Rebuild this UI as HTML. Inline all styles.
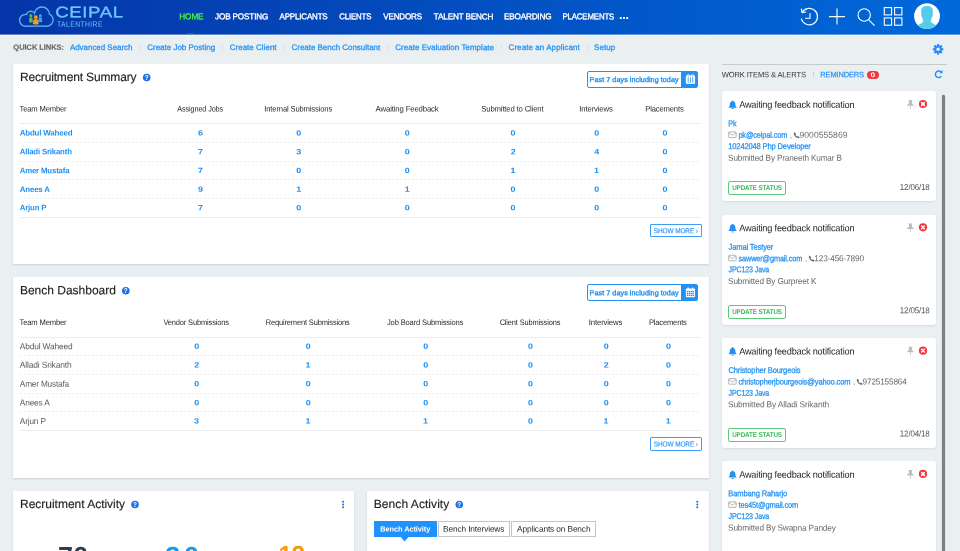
<!DOCTYPE html>
<html lang="en">
<head>
<meta charset="utf-8">
<title>CEIPAL TalentHire - Home</title>
<style>
html,body{margin:0;padding:0}
body{width:960px;height:551px;overflow:hidden;position:relative;background:#eaeff2;font-family:"Liberation Sans",sans-serif;color:#2a2a2a}
.t{position:absolute;white-space:pre;line-height:1;transform-origin:0 50%}
.abs{position:absolute}
#app{position:absolute;left:0;top:0;width:960px;height:551px;overflow:hidden;will-change:transform}
#top{position:absolute;left:0;top:0;width:960px;height:34px;background:linear-gradient(90deg,#0535a8,#0069da)}
.card{position:absolute;background:#fff;box-shadow:0 1px 2px rgba(60,80,100,.18)}
.hl{position:absolute;height:1px;background:#e9ebec;left:20px;width:681px}
.dl{position:absolute;height:1px;left:20px;width:681px;background:repeating-linear-gradient(90deg,#eeeef0 0 2.4px,transparent 2.4px 4px)}
.qsep{position:absolute;top:44.5px;width:1px;height:5.5px;background:#dbe0e4}
.datebtn{position:absolute;left:587px;width:111px;height:17px;box-sizing:border-box;border:1px solid #2490f4;border-radius:2px;background:#fff}
.datebtn i{position:absolute;right:0;top:0;bottom:0;width:16px;background:#2490f4}
.more{position:absolute;left:650px;width:52px;height:13.3px;box-sizing:border-box;border:1px solid #3f9df5;border-radius:1px;background:#fff}
.tab{position:absolute;top:521px;height:15.5px;box-sizing:border-box;border:1px solid #c4c4c4;background:#fff}
.wcard{position:absolute;left:722px;width:214.3px;height:110px;background:#fff;border-radius:3px;box-shadow:0 1px 2px rgba(60,80,100,.12)}
.upd{position:absolute;left:728.4px;width:57.6px;height:13.5px;box-sizing:border-box;border:1px solid #5cc87b;border-radius:2px}
svg{position:absolute;overflow:visible}
</style>
</head>
<body>
<div id="app">

<!-- ===== top bar ===== -->
<div id="top">
  <div class="abs" style="left:187px;top:33px;width:7px;height:1px;background:#3fd86a;opacity:.25"></div>
  <!-- logo -->
  <svg style="left:18px;top:6px" width="37" height="22"><g transform="translate(0.90 0.25)">
    <defs><mask id="cl" maskUnits="userSpaceOnUse" x="-1" y="-1" width="37" height="23">
      <g fill="#fff" stroke="#fff" stroke-width="2.7"><circle cx="6.6" cy="14" r="5.2"/><circle cx="11.9" cy="9.5" r="3.8"/><circle cx="23" cy="8.4" r="7"/><circle cx="28" cy="13.6" r="5.6"/><rect x="6.6" y="11" width="21.4" height="8.2"/></g>
      <g fill="#000"><circle cx="6.6" cy="14" r="5.2"/><circle cx="11.9" cy="9.5" r="3.8"/><circle cx="23" cy="8.4" r="7"/><circle cx="28" cy="13.6" r="5.6"/><rect x="6.6" y="11" width="21.4" height="8.2"/></g>
    </mask></defs>
    <rect x="-1" y="-1" width="37" height="23" fill="#5cb2ef" mask="url(#cl)"/>
    <g transform="translate(0.2,0.7)">
      <circle cx="11.8" cy="8.7" r="1.55" fill="#5cb848"/><path d="M9.9 15.2 L10.1 11.6 Q10.3 10.2 11.8 10.2 Q13.3 10.2 13.5 11.6 L13.7 15.2 Q11.8 16 9.9 15.2 Z" fill="#5cb848"/>
      <circle cx="21.2" cy="8.7" r="1.55" fill="#3aa2e4"/><path d="M19.3 15 L19.5 11.6 Q19.7 10.2 21.2 10.2 Q22.7 10.2 22.9 11.6 L23.1 15 Q21.2 15.8 19.3 15 Z" fill="#3aa2e4"/>
      <circle cx="16.7" cy="10.2" r="1.9" fill="#f7991c"/><path d="M13.8 17 L14.2 13.6 Q14.5 12 16.7 12 Q18.9 12 19.2 13.6 L19.6 17 Q16.7 18.2 13.8 17 Z" fill="#f7991c"/>
    </g>
  </g></svg>
  <span class="t" style="left:55px;top:4px;font-size:15.3px;letter-spacing:0.500px;color:#6cc6fa;transform:translate(0.14px,0.26px) scaleX(1.2169) rotate(0.03deg);-webkit-text-stroke:0.3px #6cc6fa;">CEIPAL</span><span class="t" style="left:57px;top:20px;font-size:7.8px;letter-spacing:0.500px;color:#6cc6fa;transform:translate(0.03px,0.70px) scaleX(0.8657) rotate(0.03deg);">TALENTHIRE</span>
  <nav><span class="t" style="left:179px;top:12px;font-size:8.5px;letter-spacing:-0.170px;color:#46ee4a;transform:translate(0.33px,0.35px) scaleX(0.9709) rotate(0.03deg);-webkit-text-stroke:0.35px #46ee4a;">HOME</span><span class="t" style="left:215px;top:12px;font-size:8.5px;letter-spacing:-0.170px;color:#fff;transform:translate(0.06px,0.35px) scaleX(0.9614) rotate(0.03deg);-webkit-text-stroke:0.35px #fff;">JOB POSTING</span><span class="t" style="left:279px;top:12px;font-size:8.5px;letter-spacing:-0.170px;color:#fff;transform:translate(0.58px,0.35px) scaleX(0.9359) rotate(0.03deg);-webkit-text-stroke:0.35px #fff;">APPLICANTS</span><span class="t" style="left:339px;top:12px;font-size:8.5px;letter-spacing:-0.170px;color:#fff;transform:translate(0.28px,0.35px) scaleX(0.9226) rotate(0.03deg);-webkit-text-stroke:0.35px #fff;">CLIENTS</span><span class="t" style="left:383px;top:12px;font-size:8.5px;letter-spacing:-0.170px;color:#fff;transform:translate(0.23px,0.35px) scaleX(0.9473) rotate(0.03deg);-webkit-text-stroke:0.35px #fff;">VENDORS</span><span class="t" style="left:433px;top:12px;font-size:8.5px;letter-spacing:-0.170px;color:#fff;transform:translate(0.78px,0.35px) scaleX(0.9604) rotate(0.03deg);-webkit-text-stroke:0.35px #fff;">TALENT BENCH</span><span class="t" style="left:503px;top:12px;font-size:8.5px;letter-spacing:-0.170px;color:#fff;transform:translate(0.93px,0.35px) scaleX(0.9587) rotate(0.03deg);-webkit-text-stroke:0.35px #fff;">EBOARDING</span><span class="t" style="left:562px;top:12px;font-size:8.5px;letter-spacing:-0.170px;color:#fff;transform:translate(0.45px,0.35px) scaleX(0.9255) rotate(0.03deg);-webkit-text-stroke:0.35px #fff;">PLACEMENTS</span><span class="t" style="left:619px;top:8px;font-size:13px;font-weight:700;letter-spacing:-0.260px;color:#fff;transform:translate(0.03px,0.00px) scaleX(0.9670) rotate(0.03deg);">...</span></nav>
  <!-- history -->
  <svg style="left:799px;top:7px" width="22" height="22" fill="none" stroke="#fff" stroke-width="1.1" stroke-linecap="round" stroke-linejoin="round"><g transform="translate(0.00 0.00) scale(1.0300 1.0300)">
    <path d="M3.1 5.2 A8 8 0 1 1 2.3 11.6"/>
    <path d="M2.3 1.9 L3 5.6 L6.6 4.9"/>
    <path d="M10.7 6.3 V10.9 H6.4"/>
  </g></svg>
  <!-- plus -->
  <svg style="left:829px;top:8px" width="17" height="18" stroke="#fff" stroke-width="1.1" fill="none"><g transform="translate(0.00 0.60)"><path d="M8 0 V16 M0 8 H16"/></g></svg>
  <!-- search -->
  <svg style="left:857px;top:8px" width="19" height="19" stroke="#fff" stroke-width="1.1" fill="none" stroke-linecap="round"><g transform="translate(0.00 0.00)"><circle cx="7.2" cy="7" r="6.2"/><path d="M11.6 11.6 L17.2 17.4"/></g></svg>
  <!-- grid -->
  <svg style="left:883px;top:7px" width="21" height="20" stroke="#fff" stroke-width="1.1" fill="none"><g transform="translate(0.70 0.00)"><rect x="0.6" y="0.6" width="7.3" height="7.3"/><rect x="10.9" y="0.6" width="7.3" height="7.3"/><rect x="0.6" y="10.9" width="7.3" height="7.3"/><rect x="10.9" y="10.9" width="7.3" height="7.3"/></g></svg>
  <!-- avatar -->
  <svg style="left:914px;top:3px" width="27" height="28"><g transform="translate(0.10 0.30)">
    <defs><clipPath id="avc"><circle cx="12.9" cy="12.9" r="12.9"/></clipPath></defs>
    <circle cx="12.9" cy="12.9" r="12.9" fill="#fff"/>
    <g clip-path="url(#avc)" fill="#55cceb">
      <path d="M12.9 2.6 C16.4 2.6 18.8 4.2 18.8 7.5 L18.7 11 C18.7 13 17.9 14.6 17.1 15.6 L16.8 18.4 C17.4 20 20.9 21 22.5 22.3 L26 26 L0 26 L3.3 22.3 C4.9 21 8.4 20 9 18.4 L8.7 15.6 C7.9 14.6 7.1 13 7.1 11 L7 7.5 C7 4.2 9.4 2.6 12.9 2.6 Z"/>
    </g>
  </g></svg>
</div>

<div class="abs" style="left:0;top:34px;width:960px;height:1px;opacity:.6;background:linear-gradient(90deg,#0535a8,#0069da)"></div>
<div class="abs" style="left:0;top:35px;width:960px;height:1px;background:#f3f6f8"></div>
<div class="abs" style="left:187px;top:34px;width:7px;height:1px;background:#35b070;opacity:.35"></div>
<!-- ===== quick links ===== -->
<div id="quick">
  <span class="t" style="left:13px;top:43px;font-size:7.5px;font-weight:700;letter-spacing:-0.056px;color:#666;transform:translate(0.37px,0.65px) rotate(0.03deg);-webkit-text-stroke:0.15px #666;">QUICK LINKS:</span><span class="t" style="left:69px;top:44px;font-size:8px;letter-spacing:-0.041px;color:#2190f3;transform:translate(0.92px,0.08px) rotate(0.03deg);-webkit-text-stroke:0.25px #2190f3;">Advanced Search</span><span class="t" style="left:147px;top:44px;font-size:8px;letter-spacing:-0.008px;color:#2190f3;transform:translate(0.23px,0.08px) rotate(0.03deg);-webkit-text-stroke:0.25px #2190f3;">Create Job Posting</span><span class="t" style="left:229px;top:44px;font-size:8px;letter-spacing:0.013px;color:#2190f3;transform:translate(0.73px,0.08px) rotate(0.03deg);-webkit-text-stroke:0.25px #2190f3;">Create Client</span><span class="t" style="left:291px;top:44px;font-size:8px;letter-spacing:-0.032px;color:#2190f3;transform:translate(0.53px,0.08px) rotate(0.03deg);-webkit-text-stroke:0.25px #2190f3;">Create Bench Consultant</span><span class="t" style="left:395px;top:44px;font-size:8px;letter-spacing:0.028px;color:#2190f3;transform:translate(0.23px,0.08px) rotate(0.03deg);-webkit-text-stroke:0.25px #2190f3;">Create Evaluation Template</span><span class="t" style="left:508px;top:44px;font-size:8px;letter-spacing:0.076px;color:#2190f3;transform:translate(0.53px,0.08px) rotate(0.03deg);-webkit-text-stroke:0.25px #2190f3;">Create an Applicant</span><span class="t" style="left:594px;top:44px;font-size:8px;letter-spacing:0.068px;color:#2190f3;transform:translate(0.01px,0.08px) rotate(0.03deg);-webkit-text-stroke:0.25px #2190f3;">Setup</span>
  <span class="qsep" style="left:140px"></span><span class="qsep" style="left:222.3px"></span><span class="qsep" style="left:283.8px"></span><span class="qsep" style="left:387.6px"></span><span class="qsep" style="left:501.2px"></span><span class="qsep" style="left:586.8px"></span>
  <!-- gear -->
  <svg style="left:932px;top:43px" width="13" height="13"><g transform="translate(0.60 0.80)">
    <g fill="#2a8cf4"><circle cx="5.5" cy="5.5" r="3.9"/>
      <g stroke="#2a8cf4" stroke-width="2.1" stroke-linecap="butt"><path d="M5.5 0.2 V10.8"/><path d="M0.2 5.5 H10.8"/><path d="M1.75 1.75 L9.25 9.25"/><path d="M9.25 1.75 L1.75 9.25"/></g>
    </g>
    <circle cx="5.5" cy="5.5" r="1.7" fill="#eaeff2"/>
  </g></svg>
</div>

<!-- ===== Recruitment Summary ===== -->
<section id="rs">
  <div class="card" style="left:13px;top:64px;width:696px;height:200px"></div>
  <svg style="left:142px;top:73px" width="10" height="10"><g transform="translate(0.90 0.70)"><circle cx="3.8" cy="3.8" r="3.8" fill="#1f70e2"/><text x="3.8" y="6.1" text-anchor="middle" font-family="Liberation Sans, sans-serif" font-size="6.4" font-weight="700" fill="#fff">?</text></g></svg><div class="datebtn" style="top:71.00px"><i></i></div><svg style="left:685px;top:74px" width="12" height="11"><g transform="translate(0.85 0.10)"><rect x="0" y="1.5" width="9.2" height="8.3" rx="1.3" fill="#fff"/><circle cx="2.5" cy="1.5" r="1.25" fill="#fff"/><circle cx="6.7" cy="1.5" r="1.25" fill="#fff"/><path d="M2.35 3 V8.8 M4.6 3 V8.8 M6.85 3 V8.8" stroke="#2490f4" stroke-width="0.75"/><path d="M2.5 1.1 V2.6 M6.7 1.1 V2.6" stroke="#2490f4" stroke-width="0.5"/></g></svg><div class="hl" style="top:123px"></div><div class="dl" style="top:141.80px"></div><div class="dl" style="top:160.50px"></div><div class="dl" style="top:179.30px"></div><div class="dl" style="top:197.80px"></div><div class="hl" style="top:216.50px"></div><div class="more" style="top:224.00px"></div>
  <span class="t" style="left:19px;top:70px;font-size:12px;letter-spacing:-0.150px;color:#1f1f1f;transform:translate(0.90px,0.94px) rotate(0.03deg);-webkit-text-stroke:0.15px #1f1f1f;">Recruitment Summary</span><span class="t" style="left:19px;top:105px;font-size:8px;letter-spacing:-0.160px;color:#2a2a2a;transform:translate(0.47px,0.58px) scaleX(0.9522) rotate(0.03deg);">Team Member</span><span class="t" style="left:177px;top:105px;font-size:8px;letter-spacing:-0.160px;color:#2a2a2a;transform:translate(0.32px,0.58px) scaleX(0.9146) rotate(0.03deg);">Assigned Jobs</span><span class="t" style="left:264px;top:105px;font-size:8px;letter-spacing:-0.160px;color:#2a2a2a;transform:translate(0.31px,0.58px) scaleX(0.9537) rotate(0.03deg);">Internal Submissions</span><span class="t" style="left:375px;top:105px;font-size:8px;letter-spacing:-0.160px;color:#2a2a2a;transform:translate(0.61px,0.58px) scaleX(0.9725) rotate(0.03deg);">Awaiting Feedback</span><span class="t" style="left:481px;top:105px;font-size:8px;letter-spacing:-0.160px;color:#2a2a2a;transform:translate(0.31px,0.58px) scaleX(0.9632) rotate(0.03deg);">Submitted to Client</span><span class="t" style="left:579px;top:105px;font-size:8px;letter-spacing:-0.160px;color:#2a2a2a;transform:translate(0.30px,0.58px) scaleX(0.9706) rotate(0.03deg);">Interviews</span><span class="t" style="left:645px;top:105px;font-size:8px;letter-spacing:-0.160px;color:#2a2a2a;transform:translate(0.22px,0.58px) scaleX(0.9535) rotate(0.03deg);">Placements</span><span class="t" style="left:19px;top:129px;font-size:8px;font-weight:700;letter-spacing:-0.160px;color:#2190f3;transform:translate(0.68px,0.55px) scaleX(0.9896) rotate(0.03deg);">Abdul Waheed</span><span class="t" style="left:198px;top:129px;font-size:7.6px;font-weight:700;color:#2190f3;transform:translate(0.11px,0.45px) scaleX(1.1800) rotate(0.03deg);">6</span><span class="t" style="left:296px;top:129px;font-size:7.6px;font-weight:700;color:#2190f3;transform:translate(0.36px,0.45px) scaleX(1.1800) rotate(0.03deg);">0</span><span class="t" style="left:404px;top:129px;font-size:7.6px;font-weight:700;color:#2190f3;transform:translate(0.86px,0.45px) scaleX(1.1800) rotate(0.03deg);">0</span><span class="t" style="left:510px;top:129px;font-size:7.6px;font-weight:700;color:#2190f3;transform:translate(0.61px,0.45px) scaleX(1.1800) rotate(0.03deg);">0</span><span class="t" style="left:594px;top:129px;font-size:7.6px;font-weight:700;color:#2190f3;transform:translate(0.21px,0.45px) scaleX(1.1800) rotate(0.03deg);">0</span><span class="t" style="left:662px;top:129px;font-size:7.6px;font-weight:700;color:#2190f3;transform:translate(0.51px,0.45px) scaleX(1.1800) rotate(0.03deg);">0</span><span class="t" style="left:19px;top:148px;font-size:8px;font-weight:700;letter-spacing:-0.160px;color:#2190f3;transform:translate(0.69px,0.25px) scaleX(0.9705) rotate(0.03deg);">Alladi Srikanth</span><span class="t" style="left:198px;top:148px;font-size:7.6px;font-weight:700;color:#2190f3;transform:translate(0.05px,0.15px) scaleX(1.1800) rotate(0.03deg);">7</span><span class="t" style="left:296px;top:148px;font-size:7.6px;font-weight:700;color:#2190f3;transform:translate(0.23px,0.15px) scaleX(1.1800) rotate(0.03deg);">3</span><span class="t" style="left:404px;top:148px;font-size:7.6px;font-weight:700;color:#2190f3;transform:translate(0.86px,0.15px) scaleX(1.1800) rotate(0.03deg);">0</span><span class="t" style="left:510px;top:148px;font-size:7.6px;font-weight:700;color:#2190f3;transform:translate(0.72px,0.15px) scaleX(1.1800) rotate(0.03deg);">2</span><span class="t" style="left:594px;top:148px;font-size:7.6px;font-weight:700;color:#2190f3;transform:translate(0.35px,0.15px) scaleX(1.1800) rotate(0.03deg);">4</span><span class="t" style="left:662px;top:148px;font-size:7.6px;font-weight:700;color:#2190f3;transform:translate(0.51px,0.15px) scaleX(1.1800) rotate(0.03deg);">0</span><span class="t" style="left:19px;top:167px;font-size:8px;font-weight:700;letter-spacing:-0.160px;color:#2190f3;transform:translate(0.69px,0.15px) scaleX(0.9748) rotate(0.03deg);">Amer Mustafa</span><span class="t" style="left:198px;top:167px;font-size:7.6px;font-weight:700;color:#2190f3;transform:translate(0.05px,0.05px) scaleX(1.1800) rotate(0.03deg);">7</span><span class="t" style="left:296px;top:167px;font-size:7.6px;font-weight:700;color:#2190f3;transform:translate(0.36px,0.05px) scaleX(1.1800) rotate(0.03deg);">0</span><span class="t" style="left:404px;top:167px;font-size:7.6px;font-weight:700;color:#2190f3;transform:translate(0.86px,0.05px) scaleX(1.1800) rotate(0.03deg);">0</span><span class="t" style="left:510px;top:167px;font-size:7.6px;font-weight:700;color:#2190f3;transform:translate(0.51px,0.05px) scaleX(1.1800) rotate(0.03deg);">1</span><span class="t" style="left:594px;top:167px;font-size:7.6px;font-weight:700;color:#2190f3;transform:translate(0.11px,0.05px) scaleX(1.1800) rotate(0.03deg);">1</span><span class="t" style="left:662px;top:167px;font-size:7.6px;font-weight:700;color:#2190f3;transform:translate(0.51px,0.05px) scaleX(1.1800) rotate(0.03deg);">0</span><span class="t" style="left:19px;top:185px;font-size:8px;font-weight:700;letter-spacing:-0.160px;color:#2190f3;transform:translate(0.68px,0.95px) scaleX(0.9876) rotate(0.03deg);">Anees A</span><span class="t" style="left:198px;top:185px;font-size:7.6px;font-weight:700;color:#2190f3;transform:translate(0.12px,0.85px) scaleX(1.1800) rotate(0.03deg);">9</span><span class="t" style="left:296px;top:185px;font-size:7.6px;font-weight:700;color:#2190f3;transform:translate(0.26px,0.85px) scaleX(1.1800) rotate(0.03deg);">1</span><span class="t" style="left:404px;top:185px;font-size:7.6px;font-weight:700;color:#2190f3;transform:translate(0.76px,0.85px) scaleX(1.1800) rotate(0.03deg);">1</span><span class="t" style="left:510px;top:185px;font-size:7.6px;font-weight:700;color:#2190f3;transform:translate(0.61px,0.85px) scaleX(1.1800) rotate(0.03deg);">0</span><span class="t" style="left:594px;top:185px;font-size:7.6px;font-weight:700;color:#2190f3;transform:translate(0.21px,0.85px) scaleX(1.1800) rotate(0.03deg);">0</span><span class="t" style="left:662px;top:185px;font-size:7.6px;font-weight:700;color:#2190f3;transform:translate(0.51px,0.85px) scaleX(1.1800) rotate(0.03deg);">0</span><span class="t" style="left:19px;top:204px;font-size:8px;font-weight:700;letter-spacing:-0.160px;color:#2190f3;transform:translate(0.69px,0.35px) scaleX(0.9731) rotate(0.03deg);">Arjun P</span><span class="t" style="left:198px;top:204px;font-size:7.6px;font-weight:700;color:#2190f3;transform:translate(0.05px,0.25px) scaleX(1.1800) rotate(0.03deg);">7</span><span class="t" style="left:296px;top:204px;font-size:7.6px;font-weight:700;color:#2190f3;transform:translate(0.36px,0.25px) scaleX(1.1800) rotate(0.03deg);">0</span><span class="t" style="left:404px;top:204px;font-size:7.6px;font-weight:700;color:#2190f3;transform:translate(0.86px,0.25px) scaleX(1.1800) rotate(0.03deg);">0</span><span class="t" style="left:510px;top:204px;font-size:7.6px;font-weight:700;color:#2190f3;transform:translate(0.61px,0.25px) scaleX(1.1800) rotate(0.03deg);">0</span><span class="t" style="left:594px;top:204px;font-size:7.6px;font-weight:700;color:#2190f3;transform:translate(0.21px,0.25px) scaleX(1.1800) rotate(0.03deg);">0</span><span class="t" style="left:662px;top:204px;font-size:7.6px;font-weight:700;color:#2190f3;transform:translate(0.51px,0.25px) scaleX(1.1800) rotate(0.03deg);">0</span><span class="t" style="left:589px;top:75px;font-size:7.2px;letter-spacing:0.056px;color:#2190f3;transform:translate(0.61px,0.95px) rotate(0.03deg);-webkit-text-stroke:0.35px #2190f3;">Past 7 days including today</span><span class="t" style="left:653px;top:227px;font-size:7.2px;letter-spacing:-0.144px;color:#2190f3;transform:translate(0.84px,0.15px) scaleX(0.9018) rotate(0.03deg);-webkit-text-stroke:0.12px #2190f3;">SHOW MORE ›</span>
</section>

<!-- ===== Bench Dashboard ===== -->
<section id="bd">
  <div class="card" style="left:13px;top:277px;width:696px;height:200.6px"></div>
  <svg style="left:122px;top:287px" width="9" height="9"><g transform="translate(0.00 0.00)"><circle cx="3.8" cy="3.8" r="3.8" fill="#1f70e2"/><text x="3.8" y="6.1" text-anchor="middle" font-family="Liberation Sans, sans-serif" font-size="6.4" font-weight="700" fill="#fff">?</text></g></svg><div class="datebtn" style="top:284.30px"><i></i></div><svg style="left:685px;top:287px" width="12" height="12"><g transform="translate(0.85 0.40) scale(0.9787 1.0208)"><rect x="0" y="1.2" width="9.4" height="8.4" rx="0.8" fill="#fff"/><path d="M2.4 0 V2.4 M7 0 V2.4" stroke="#fff" stroke-width="1.2"/><g fill="#2490f4"><rect x="1.1" y="3.4" width="1.5" height="1.3"/><rect x="3.1" y="3.4" width="1.5" height="1.3"/><rect x="5.1" y="3.4" width="1.5" height="1.3"/><rect x="7.0" y="3.4" width="1.4" height="1.3"/><rect x="1.1" y="5.3" width="1.5" height="1.3"/><rect x="3.1" y="5.3" width="1.5" height="1.3"/><rect x="5.1" y="5.3" width="1.5" height="1.3"/><rect x="7.0" y="5.3" width="1.4" height="1.3"/><rect x="1.1" y="7.2" width="1.5" height="1.3"/><rect x="3.1" y="7.2" width="1.5" height="1.3"/><rect x="5.1" y="7.2" width="1.5" height="1.3"/><rect x="7.0" y="7.2" width="1.4" height="1.3"/></g></g></svg><div class="hl" style="top:337px"></div><div class="dl" style="top:355.10px"></div><div class="dl" style="top:373.80px"></div><div class="dl" style="top:392.60px"></div><div class="dl" style="top:411.10px"></div><div class="hl" style="top:429.80px"></div><div class="more" style="top:437.30px"></div>
  <span class="t" style="left:19px;top:284px;font-size:12px;color:#1f1f1f;transform:translate(0.90px,0.24px) rotate(0.03deg);-webkit-text-stroke:0.15px #1f1f1f;">Bench Dashboard</span><span class="t" style="left:19px;top:318px;font-size:8px;letter-spacing:-0.160px;color:#2a2a2a;transform:translate(0.47px,0.88px) scaleX(0.9522) rotate(0.03deg);">Team Member</span><span class="t" style="left:163px;top:318px;font-size:8px;letter-spacing:-0.160px;color:#2a2a2a;transform:translate(0.38px,0.88px) scaleX(0.9348) rotate(0.03deg);">Vendor Submissions</span><span class="t" style="left:265px;top:318px;font-size:8px;letter-spacing:-0.160px;color:#2a2a2a;transform:translate(0.68px,0.88px) scaleX(0.9360) rotate(0.03deg);">Requirement Submissions</span><span class="t" style="left:386px;top:318px;font-size:8px;letter-spacing:-0.160px;color:#2a2a2a;transform:translate(0.99px,0.88px) scaleX(0.9449) rotate(0.03deg);">Job Board Submissions</span><span class="t" style="left:499px;top:318px;font-size:8px;letter-spacing:-0.160px;color:#2a2a2a;transform:translate(0.64px,0.88px) scaleX(0.9297) rotate(0.03deg);">Client Submissions</span><span class="t" style="left:588px;top:318px;font-size:8px;letter-spacing:-0.160px;color:#2a2a2a;transform:translate(0.80px,0.88px) scaleX(0.9706) rotate(0.03deg);">Interviews</span><span class="t" style="left:648px;top:318px;font-size:8px;letter-spacing:-0.160px;color:#2a2a2a;transform:translate(0.92px,0.88px) scaleX(0.9408) rotate(0.03deg);">Placements</span><span class="t" style="left:19px;top:342px;font-size:8.6px;letter-spacing:-0.172px;color:#5a5a5a;transform:translate(0.83px,0.14px) scaleX(0.9732) rotate(0.03deg);">Abdul Waheed</span><span class="t" style="left:194px;top:342px;font-size:7.6px;font-weight:700;color:#2190f3;transform:translate(0.21px,0.75px) scaleX(1.1800) rotate(0.03deg);">0</span><span class="t" style="left:305px;top:342px;font-size:7.6px;font-weight:700;color:#2190f3;transform:translate(0.71px,0.75px) scaleX(1.1800) rotate(0.03deg);">0</span><span class="t" style="left:423px;top:342px;font-size:7.6px;font-weight:700;color:#2190f3;transform:translate(0.21px,0.75px) scaleX(1.1800) rotate(0.03deg);">0</span><span class="t" style="left:527px;top:342px;font-size:7.6px;font-weight:700;color:#2190f3;transform:translate(0.96px,0.75px) scaleX(1.1800) rotate(0.03deg);">0</span><span class="t" style="left:603px;top:342px;font-size:7.6px;font-weight:700;color:#2190f3;transform:translate(0.71px,0.75px) scaleX(1.1800) rotate(0.03deg);">0</span><span class="t" style="left:665px;top:342px;font-size:7.6px;font-weight:700;color:#2190f3;transform:translate(0.96px,0.75px) scaleX(1.1800) rotate(0.03deg);">0</span><span class="t" style="left:19px;top:360px;font-size:8.6px;letter-spacing:-0.172px;color:#5a5a5a;transform:translate(0.83px,0.84px) scaleX(0.9870) rotate(0.03deg);">Alladi Srikanth</span><span class="t" style="left:194px;top:361px;font-size:7.6px;font-weight:700;color:#2190f3;transform:translate(0.32px,0.45px) scaleX(1.1800) rotate(0.03deg);">2</span><span class="t" style="left:305px;top:361px;font-size:7.6px;font-weight:700;color:#2190f3;transform:translate(0.61px,0.45px) scaleX(1.1800) rotate(0.03deg);">1</span><span class="t" style="left:423px;top:361px;font-size:7.6px;font-weight:700;color:#2190f3;transform:translate(0.21px,0.45px) scaleX(1.1800) rotate(0.03deg);">0</span><span class="t" style="left:527px;top:361px;font-size:7.6px;font-weight:700;color:#2190f3;transform:translate(0.96px,0.45px) scaleX(1.1800) rotate(0.03deg);">0</span><span class="t" style="left:603px;top:361px;font-size:7.6px;font-weight:700;color:#2190f3;transform:translate(0.82px,0.45px) scaleX(1.1800) rotate(0.03deg);">2</span><span class="t" style="left:665px;top:361px;font-size:7.6px;font-weight:700;color:#2190f3;transform:translate(0.96px,0.45px) scaleX(1.1800) rotate(0.03deg);">0</span><span class="t" style="left:19px;top:379px;font-size:8.6px;letter-spacing:-0.172px;color:#5a5a5a;transform:translate(0.84px,0.74px) scaleX(0.9564) rotate(0.03deg);">Amer Mustafa</span><span class="t" style="left:194px;top:380px;font-size:7.6px;font-weight:700;color:#2190f3;transform:translate(0.21px,0.35px) scaleX(1.1800) rotate(0.03deg);">0</span><span class="t" style="left:305px;top:380px;font-size:7.6px;font-weight:700;color:#2190f3;transform:translate(0.71px,0.35px) scaleX(1.1800) rotate(0.03deg);">0</span><span class="t" style="left:423px;top:380px;font-size:7.6px;font-weight:700;color:#2190f3;transform:translate(0.21px,0.35px) scaleX(1.1800) rotate(0.03deg);">0</span><span class="t" style="left:527px;top:380px;font-size:7.6px;font-weight:700;color:#2190f3;transform:translate(0.96px,0.35px) scaleX(1.1800) rotate(0.03deg);">0</span><span class="t" style="left:603px;top:380px;font-size:7.6px;font-weight:700;color:#2190f3;transform:translate(0.71px,0.35px) scaleX(1.1800) rotate(0.03deg);">0</span><span class="t" style="left:665px;top:380px;font-size:7.6px;font-weight:700;color:#2190f3;transform:translate(0.96px,0.35px) scaleX(1.1800) rotate(0.03deg);">0</span><span class="t" style="left:19px;top:398px;font-size:8.6px;letter-spacing:-0.172px;color:#5a5a5a;transform:translate(0.84px,0.54px) scaleX(0.9637) rotate(0.03deg);">Anees A</span><span class="t" style="left:194px;top:399px;font-size:7.6px;font-weight:700;color:#2190f3;transform:translate(0.21px,0.15px) scaleX(1.1800) rotate(0.03deg);">0</span><span class="t" style="left:305px;top:399px;font-size:7.6px;font-weight:700;color:#2190f3;transform:translate(0.71px,0.15px) scaleX(1.1800) rotate(0.03deg);">0</span><span class="t" style="left:423px;top:399px;font-size:7.6px;font-weight:700;color:#2190f3;transform:translate(0.21px,0.15px) scaleX(1.1800) rotate(0.03deg);">0</span><span class="t" style="left:527px;top:399px;font-size:7.6px;font-weight:700;color:#2190f3;transform:translate(0.96px,0.15px) scaleX(1.1800) rotate(0.03deg);">0</span><span class="t" style="left:603px;top:399px;font-size:7.6px;font-weight:700;color:#2190f3;transform:translate(0.71px,0.15px) scaleX(1.1800) rotate(0.03deg);">0</span><span class="t" style="left:665px;top:399px;font-size:7.6px;font-weight:700;color:#2190f3;transform:translate(0.96px,0.15px) scaleX(1.1800) rotate(0.03deg);">0</span><span class="t" style="left:19px;top:416px;font-size:8.6px;letter-spacing:-0.172px;color:#5a5a5a;transform:translate(0.84px,0.94px) scaleX(0.9595) rotate(0.03deg);">Arjun P</span><span class="t" style="left:194px;top:417px;font-size:7.6px;font-weight:700;color:#2190f3;transform:translate(0.08px,0.55px) scaleX(1.1800) rotate(0.03deg);">3</span><span class="t" style="left:305px;top:417px;font-size:7.6px;font-weight:700;color:#2190f3;transform:translate(0.61px,0.55px) scaleX(1.1800) rotate(0.03deg);">1</span><span class="t" style="left:423px;top:417px;font-size:7.6px;font-weight:700;color:#2190f3;transform:translate(0.11px,0.55px) scaleX(1.1800) rotate(0.03deg);">1</span><span class="t" style="left:527px;top:417px;font-size:7.6px;font-weight:700;color:#2190f3;transform:translate(0.96px,0.55px) scaleX(1.1800) rotate(0.03deg);">0</span><span class="t" style="left:603px;top:417px;font-size:7.6px;font-weight:700;color:#2190f3;transform:translate(0.61px,0.55px) scaleX(1.1800) rotate(0.03deg);">1</span><span class="t" style="left:665px;top:417px;font-size:7.6px;font-weight:700;color:#2190f3;transform:translate(0.86px,0.55px) scaleX(1.1800) rotate(0.03deg);">1</span><span class="t" style="left:589px;top:289px;font-size:7.2px;letter-spacing:0.056px;color:#2190f3;transform:translate(0.61px,0.25px) rotate(0.03deg);-webkit-text-stroke:0.35px #2190f3;">Past 7 days including today</span><span class="t" style="left:653px;top:440px;font-size:7.2px;letter-spacing:-0.144px;color:#2190f3;transform:translate(0.84px,0.45px) scaleX(0.9018) rotate(0.03deg);-webkit-text-stroke:0.12px #2190f3;">SHOW MORE ›</span>
</section>

<!-- ===== Recruitment Activity ===== -->
<section id="ra">
  <div class="card" style="left:13px;top:490.75px;width:341.3px;height:80px"></div>
  <svg style="left:131px;top:500px" width="9" height="10"><g transform="translate(0.20 0.70)"><circle cx="3.8" cy="3.8" r="3.8" fill="#1f70e2"/><text x="3.8" y="6.1" text-anchor="middle" font-family="Liberation Sans, sans-serif" font-size="6.4" font-weight="700" fill="#fff">?</text></g></svg>
  <svg style="left:341px;top:500px" width="5" height="10" fill="#1f70e2"><g transform="translate(0.60 0.60)"><circle cx="1.5" cy="1.2" r="1.05"/><circle cx="1.5" cy="3.95" r="1.05"/><circle cx="1.5" cy="6.7" r="1.05"/></g></svg>
  <span class="t" style="left:20px;top:498px;font-size:12px;letter-spacing:-0.016px;color:#1f1f1f;transform:translate(0.00px,0.04px) rotate(0.03deg);-webkit-text-stroke:0.15px #1f1f1f;">Recruitment Activity</span><span class="t" style="left:57px;top:543px;font-size:27px;font-weight:700;letter-spacing:0.357px;color:#2d3e50;transform:translate(0.90px,0.56px) rotate(0.03deg);">70</span><span class="t" style="left:165px;top:543px;font-size:27px;font-weight:700;letter-spacing:3.809px;color:#0f9ff1;transform:translate(0.25px,0.56px) rotate(0.03deg);">30</span><span class="t" style="left:278px;top:542px;font-size:27px;font-weight:700;letter-spacing:-0.540px;color:#f39c12;transform:translate(0.50px,0.56px) scaleX(0.9030) rotate(0.03deg);">12</span>
</section>

<!-- ===== Bench Activity ===== -->
<section id="ba">
  <div class="card" style="left:367px;top:490.75px;width:342px;height:80px"></div>
  <svg style="left:455px;top:500px" width="10" height="10"><g transform="translate(0.50 0.70)"><circle cx="3.8" cy="3.8" r="3.8" fill="#1f70e2"/><text x="3.8" y="6.1" text-anchor="middle" font-family="Liberation Sans, sans-serif" font-size="6.4" font-weight="700" fill="#fff">?</text></g></svg>
  <svg style="left:695px;top:500px" width="5" height="10" fill="#1f70e2"><g transform="translate(0.80 0.60)"><circle cx="1.5" cy="1.2" r="1.05"/><circle cx="1.5" cy="3.95" r="1.05"/><circle cx="1.5" cy="6.7" r="1.05"/></g></svg>
  <div class="tab" style="left:374px;width:62.8px;height:15.7px;background:#1f92fc;border-color:#1f92fc"></div>
  <svg style="left:400px;top:536px" width="10" height="7"><g transform="translate(0.20 0.40)"><path d="M0 0 H8.8 L4.4 5 Z" fill="#1f92fc"/></g></svg>
  <div class="tab" style="left:438px;width:71.5px"></div>
  <div class="tab" style="left:511.3px;width:84.7px"></div>
  <span class="t" style="left:373px;top:498px;font-size:12px;letter-spacing:0.059px;color:#1f1f1f;transform:translate(0.80px,0.04px) rotate(0.03deg);-webkit-text-stroke:0.15px #1f1f1f;">Bench Activity</span><span class="t" style="left:380px;top:525px;font-size:7.4px;font-weight:700;letter-spacing:-0.078px;color:#fff;transform:translate(0.25px,0.60px) rotate(0.03deg);">Bench Activity</span><span class="t" style="left:443px;top:524px;font-size:8.3px;letter-spacing:-0.122px;color:#2a2a2a;transform:translate(0.04px,0.79px) rotate(0.03deg);">Bench Interviews</span><span class="t" style="left:517px;top:524px;font-size:8.3px;letter-spacing:-0.119px;color:#2a2a2a;transform:translate(0.01px,0.79px) rotate(0.03deg);">Applicants on Bench</span>
</section>

<!-- ===== Work items ===== -->
<aside id="work">
  <div class="abs" style="left:722px;top:64px;width:225px;height:1px;background:#c6cacd"></div>
  <div class="abs" style="left:813px;top:71.6px;width:1px;height:5.8px;background:#cdd2d6"></div>
  <div class="abs" style="left:867px;top:71px;width:11.6px;height:7.8px;border-radius:4px;background:#f5363f"></div>
  <!-- refresh -->
  <svg style="left:934px;top:70px" width="10" height="10" fill="none" stroke="#2a8ff5" stroke-width="1.5"><g transform="translate(0.80 0.00)"><path d="M6.5 6.3 A3.3 3.3 0 1 1 6.3 2"/><path d="M7.8 0 V3.3 H4.5 Z" fill="#2a8ff5" stroke="none"/></g></svg>
  <span class="t" style="left:721px;top:71px;font-size:7.8px;letter-spacing:-0.156px;color:#333;transform:translate(0.78px,0.20px) scaleX(0.9703) rotate(0.03deg);">WORK ITEMS &amp; ALERTS</span><span class="t" style="left:820px;top:71px;font-size:7.8px;letter-spacing:-0.156px;color:#2190f3;transform:translate(0.36px,0.20px) scaleX(0.9582) rotate(0.03deg);-webkit-text-stroke:0.2px #2190f3;">REMINDERS</span><span class="t" style="left:870px;top:71px;font-size:7px;font-weight:700;color:#fff;transform:translate(0.58px,0.27px) scaleX(1.1917) rotate(0.03deg);">0</span>
  <article id="wc0"><div class="wcard" style="top:91.25px"></div><svg style="left:728px;top:100px" width="10" height="11" fill="#2490f4"><g transform="translate(0.60 0.45)"><path d="M4 0 C4.5 0 4.8 0.3 4.8 0.8 C6.2 1.2 6.8 2.4 6.8 3.8 C6.8 5.4 7.2 6.2 8 6.8 V7.2 H0 V6.8 C0.8 6.2 1.2 5.4 1.2 3.8 C1.2 2.4 1.8 1.2 3.2 0.8 C3.2 0.3 3.5 0 4 0 Z"/><path d="M2.9 7.6 H5.1 C5.1 8.2 4.6 8.6 4 8.6 C3.4 8.6 2.9 8.2 2.9 7.6 Z"/></g></svg><svg style="left:907px;top:100px" width="8" height="10" fill="#bdbdbd"><g transform="translate(0.00 0.05)"><path d="M1.4 0 H5.4 V0.8 H4.9 V3.6 C5.9 4 6.6 4.7 6.8 5.6 H0 C0.2 4.7 0.9 4 1.9 3.6 V0.8 H1.4 Z"/><rect x="3.05" y="5.6" width="0.7" height="3.2"/></g></svg><svg style="left:918px;top:99px" width="11" height="11"><g transform="translate(0.90 0.90)"><circle cx="4.1" cy="4.1" r="4.1" fill="#f5363f"/><path d="M2.7 2.7 L5.5 5.5 M5.5 2.7 L2.7 5.5" stroke="#fff" stroke-width="1.5" stroke-linecap="round"/></g></svg><svg style="left:728px;top:131px" width="10" height="8" fill="none" stroke="#8c8c8c" stroke-width="0.65"><g transform="translate(0.30 0.55)"><rect x="0.35" y="0.35" width="7.5" height="5.6" rx="0.7"/><path d="M0.6 1.2 L4.1 3.8 L7.6 1.2"/></g></svg><svg style="left:793px;top:132px" width="8" height="8" fill="#666"><g transform="translate(0.80 0.35)"><path d="M1.2 0.1 L2.1 1.5 C2.2 1.7 2.2 1.9 2 2.1 L1.6 2.5 C2 3.3 2.6 3.9 3.4 4.3 L3.8 3.9 C4 3.7 4.2 3.7 4.4 3.8 L5.7 4.7 C5.85 4.8 5.85 5 5.7 5.2 C5.3 5.7 4.7 5.9 4 5.7 C2 5.1 0.7 3.8 0.1 1.8 C-0.1 1.1 0.1 0.5 0.6 0.1 C0.8 -0.05 1.1 -0.05 1.2 0.1 Z"/></g></svg><div class="upd" style="top:181px"></div><span class="t" style="left:739px;top:99px;font-size:9.5px;letter-spacing:-0.190px;color:#222;transform:translate(0.16px,0.82px) scaleX(0.9655) rotate(0.03deg);">Awaiting feedback notification</span><span class="t" style="left:728px;top:119px;font-size:8.4px;letter-spacing:-0.168px;color:#2190f3;transform:translate(0.35px,0.29px) scaleX(0.8553) rotate(0.03deg);-webkit-text-stroke:0.25px #2190f3;">Pk</span><span class="t" style="left:738px;top:130px;font-size:8.4px;letter-spacing:-0.168px;color:#2190f3;transform:translate(0.38px,0.79px) scaleX(0.8852) rotate(0.03deg);-webkit-text-stroke:0.25px #2190f3;">pk@ceipal.com</span><span class="t" style="left:790px;top:131px;font-size:8px;color:#777;transform:translate(0.00px,0.68px) rotate(0.03deg);">,</span><span class="t" style="left:799px;top:130px;font-size:8.6px;letter-spacing:0.013px;color:#6a6a6a;transform:translate(0.54px,0.79px) rotate(0.03deg);">9000555869</span><span class="t" style="left:728px;top:141px;font-size:8.4px;letter-spacing:-0.168px;color:#2190f3;transform:translate(0.23px,0.99px) scaleX(0.9030) rotate(0.03deg);-webkit-text-stroke:0.25px #2190f3;">10242048 Php Developer</span><span class="t" style="left:728px;top:153px;font-size:8.6px;letter-spacing:-0.172px;color:#6a6a6a;transform:translate(0.08px,0.64px) scaleX(0.9535) rotate(0.03deg);">Submitted By Praneeth Kumar B</span><span class="t" style="left:732px;top:184px;font-size:6.8px;font-weight:700;letter-spacing:-0.136px;color:#35b958;transform:translate(0.18px,0.94px) scaleX(0.9260) rotate(0.03deg);">UPDATE STATUS</span><span class="t" style="left:899px;top:182px;font-size:8.6px;letter-spacing:-0.172px;color:#555;transform:translate(0.84px,0.89px) scaleX(0.9294) rotate(0.03deg);">12/06/18</span></article>
<article id="wc1"><div class="wcard" style="top:214.60px"></div><svg style="left:728px;top:223px" width="10" height="11" fill="#2490f4"><g transform="translate(0.60 0.80)"><path d="M4 0 C4.5 0 4.8 0.3 4.8 0.8 C6.2 1.2 6.8 2.4 6.8 3.8 C6.8 5.4 7.2 6.2 8 6.8 V7.2 H0 V6.8 C0.8 6.2 1.2 5.4 1.2 3.8 C1.2 2.4 1.8 1.2 3.2 0.8 C3.2 0.3 3.5 0 4 0 Z"/><path d="M2.9 7.6 H5.1 C5.1 8.2 4.6 8.6 4 8.6 C3.4 8.6 2.9 8.2 2.9 7.6 Z"/></g></svg><svg style="left:907px;top:223px" width="8" height="11" fill="#bdbdbd"><g transform="translate(0.00 0.40)"><path d="M1.4 0 H5.4 V0.8 H4.9 V3.6 C5.9 4 6.6 4.7 6.8 5.6 H0 C0.2 4.7 0.9 4 1.9 3.6 V0.8 H1.4 Z"/><rect x="3.05" y="5.6" width="0.7" height="3.2"/></g></svg><svg style="left:918px;top:223px" width="11" height="10"><g transform="translate(0.90 0.25)"><circle cx="4.1" cy="4.1" r="4.1" fill="#f5363f"/><path d="M2.7 2.7 L5.5 5.5 M5.5 2.7 L2.7 5.5" stroke="#fff" stroke-width="1.5" stroke-linecap="round"/></g></svg><svg style="left:728px;top:254px" width="10" height="9" fill="none" stroke="#8c8c8c" stroke-width="0.65"><g transform="translate(0.30 0.90)"><rect x="0.35" y="0.35" width="7.5" height="5.6" rx="0.7"/><path d="M0.6 1.2 L4.1 3.8 L7.6 1.2"/></g></svg><svg style="left:808px;top:255px" width="8" height="8" fill="#666"><g transform="translate(0.80 0.70)"><path d="M1.2 0.1 L2.1 1.5 C2.2 1.7 2.2 1.9 2 2.1 L1.6 2.5 C2 3.3 2.6 3.9 3.4 4.3 L3.8 3.9 C4 3.7 4.2 3.7 4.4 3.8 L5.7 4.7 C5.85 4.8 5.85 5 5.7 5.2 C5.3 5.7 4.7 5.9 4 5.7 C2 5.1 0.7 3.8 0.1 1.8 C-0.1 1.1 0.1 0.5 0.6 0.1 C0.8 -0.05 1.1 -0.05 1.2 0.1 Z"/></g></svg><div class="upd" style="top:305px"></div><span class="t" style="left:739px;top:223px;font-size:9.5px;letter-spacing:-0.190px;color:#222;transform:translate(0.16px,0.17px) scaleX(0.9655) rotate(0.03deg);">Awaiting feedback notification</span><span class="t" style="left:728px;top:242px;font-size:8.4px;letter-spacing:-0.168px;color:#2190f3;transform:translate(0.50px,0.64px) scaleX(0.9072) rotate(0.03deg);-webkit-text-stroke:0.25px #2190f3;">Jamal Testyer</span><span class="t" style="left:738px;top:254px;font-size:8.4px;letter-spacing:-0.168px;color:#2190f3;transform:translate(0.44px,0.14px) scaleX(0.8817) rotate(0.03deg);-webkit-text-stroke:0.25px #2190f3;">sawwer@gmail.com</span><span class="t" style="left:805px;top:255px;font-size:8px;color:#777;transform:translate(0.00px,0.03px) rotate(0.03deg);">,</span><span class="t" style="left:814px;top:254px;font-size:8.6px;letter-spacing:-0.172px;color:#6a6a6a;transform:translate(0.31px,0.14px) scaleX(0.9620) rotate(0.03deg);">123-456-7890</span><span class="t" style="left:728px;top:265px;font-size:8.4px;letter-spacing:-0.168px;color:#2190f3;transform:translate(0.52px,0.34px) scaleX(0.8475) rotate(0.03deg);-webkit-text-stroke:0.25px #2190f3;">JPC123 Java</span><span class="t" style="left:728px;top:276px;font-size:8.6px;letter-spacing:-0.172px;color:#6a6a6a;transform:translate(0.08px,0.99px) scaleX(0.9633) rotate(0.03deg);">Submitted By Gurpreet K</span><span class="t" style="left:732px;top:308px;font-size:6.8px;font-weight:700;letter-spacing:-0.136px;color:#35b958;transform:translate(0.18px,0.94px) scaleX(0.9260) rotate(0.03deg);">UPDATE STATUS</span><span class="t" style="left:899px;top:306px;font-size:8.6px;letter-spacing:-0.172px;color:#555;transform:translate(0.84px,0.24px) scaleX(0.9294) rotate(0.03deg);">12/05/18</span></article>
<article id="wc2"><div class="wcard" style="top:337.90px"></div><svg style="left:728px;top:347px" width="10" height="10" fill="#2490f4"><g transform="translate(0.60 0.10)"><path d="M4 0 C4.5 0 4.8 0.3 4.8 0.8 C6.2 1.2 6.8 2.4 6.8 3.8 C6.8 5.4 7.2 6.2 8 6.8 V7.2 H0 V6.8 C0.8 6.2 1.2 5.4 1.2 3.8 C1.2 2.4 1.8 1.2 3.2 0.8 C3.2 0.3 3.5 0 4 0 Z"/><path d="M2.9 7.6 H5.1 C5.1 8.2 4.6 8.6 4 8.6 C3.4 8.6 2.9 8.2 2.9 7.6 Z"/></g></svg><svg style="left:907px;top:346px" width="8" height="11" fill="#bdbdbd"><g transform="translate(0.00 0.70)"><path d="M1.4 0 H5.4 V0.8 H4.9 V3.6 C5.9 4 6.6 4.7 6.8 5.6 H0 C0.2 4.7 0.9 4 1.9 3.6 V0.8 H1.4 Z"/><rect x="3.05" y="5.6" width="0.7" height="3.2"/></g></svg><svg style="left:918px;top:346px" width="11" height="10"><g transform="translate(0.90 0.55)"><circle cx="4.1" cy="4.1" r="4.1" fill="#f5363f"/><path d="M2.7 2.7 L5.5 5.5 M5.5 2.7 L2.7 5.5" stroke="#fff" stroke-width="1.5" stroke-linecap="round"/></g></svg><svg style="left:728px;top:378px" width="10" height="8" fill="none" stroke="#8c8c8c" stroke-width="0.65"><g transform="translate(0.30 0.20)"><rect x="0.35" y="0.35" width="7.5" height="5.6" rx="0.7"/><path d="M0.6 1.2 L4.1 3.8 L7.6 1.2"/></g></svg><svg style="left:856px;top:379px" width="8" height="7" fill="#666"><g transform="translate(0.80 0.00)"><path d="M1.2 0.1 L2.1 1.5 C2.2 1.7 2.2 1.9 2 2.1 L1.6 2.5 C2 3.3 2.6 3.9 3.4 4.3 L3.8 3.9 C4 3.7 4.2 3.7 4.4 3.8 L5.7 4.7 C5.85 4.8 5.85 5 5.7 5.2 C5.3 5.7 4.7 5.9 4 5.7 C2 5.1 0.7 3.8 0.1 1.8 C-0.1 1.1 0.1 0.5 0.6 0.1 C0.8 -0.05 1.1 -0.05 1.2 0.1 Z"/></g></svg><div class="upd" style="top:428px"></div><span class="t" style="left:739px;top:346px;font-size:9.5px;letter-spacing:-0.190px;color:#222;transform:translate(0.16px,0.47px) scaleX(0.9655) rotate(0.03deg);">Awaiting feedback notification</span><span class="t" style="left:728px;top:365px;font-size:8.4px;letter-spacing:-0.168px;color:#2190f3;transform:translate(0.48px,0.94px) scaleX(0.9014) rotate(0.03deg);-webkit-text-stroke:0.25px #2190f3;">Christopher Bourgeois</span><span class="t" style="left:738px;top:377px;font-size:8.4px;letter-spacing:-0.168px;color:#2190f3;transform:translate(0.48px,0.44px) scaleX(0.9000) rotate(0.03deg);-webkit-text-stroke:0.25px #2190f3;">christopherjbourgeois@yahoo.com</span><span class="t" style="left:853px;top:378px;font-size:8px;color:#777;transform:translate(0.00px,0.33px) rotate(0.03deg);">,</span><span class="t" style="left:862px;top:377px;font-size:8.6px;letter-spacing:-0.172px;color:#6a6a6a;transform:translate(0.56px,0.44px) scaleX(0.9575) rotate(0.03deg);">9725155864</span><span class="t" style="left:728px;top:388px;font-size:8.4px;letter-spacing:-0.168px;color:#2190f3;transform:translate(0.52px,0.64px) scaleX(0.8475) rotate(0.03deg);-webkit-text-stroke:0.25px #2190f3;">JPC123 Java</span><span class="t" style="left:728px;top:400px;font-size:8.6px;letter-spacing:-0.172px;color:#6a6a6a;transform:translate(0.06px,0.29px) scaleX(0.9794) rotate(0.03deg);">Submitted By Alladi Srikanth</span><span class="t" style="left:732px;top:431px;font-size:6.8px;font-weight:700;letter-spacing:-0.136px;color:#35b958;transform:translate(0.18px,0.94px) scaleX(0.9260) rotate(0.03deg);">UPDATE STATUS</span><span class="t" style="left:899px;top:429px;font-size:8.6px;letter-spacing:-0.172px;color:#555;transform:translate(0.84px,0.54px) scaleX(0.9294) rotate(0.03deg);">12/04/18</span></article>
<article id="wc3"><div class="wcard" style="top:461.20px"></div><svg style="left:728px;top:470px" width="10" height="10" fill="#2490f4"><g transform="translate(0.60 0.40)"><path d="M4 0 C4.5 0 4.8 0.3 4.8 0.8 C6.2 1.2 6.8 2.4 6.8 3.8 C6.8 5.4 7.2 6.2 8 6.8 V7.2 H0 V6.8 C0.8 6.2 1.2 5.4 1.2 3.8 C1.2 2.4 1.8 1.2 3.2 0.8 C3.2 0.3 3.5 0 4 0 Z"/><path d="M2.9 7.6 H5.1 C5.1 8.2 4.6 8.6 4 8.6 C3.4 8.6 2.9 8.2 2.9 7.6 Z"/></g></svg><svg style="left:907px;top:470px" width="8" height="10" fill="#bdbdbd"><g transform="translate(0.00 0.00)"><path d="M1.4 0 H5.4 V0.8 H4.9 V3.6 C5.9 4 6.6 4.7 6.8 5.6 H0 C0.2 4.7 0.9 4 1.9 3.6 V0.8 H1.4 Z"/><rect x="3.05" y="5.6" width="0.7" height="3.2"/></g></svg><svg style="left:918px;top:469px" width="11" height="11"><g transform="translate(0.90 0.85)"><circle cx="4.1" cy="4.1" r="4.1" fill="#f5363f"/><path d="M2.7 2.7 L5.5 5.5 M5.5 2.7 L2.7 5.5" stroke="#fff" stroke-width="1.5" stroke-linecap="round"/></g></svg><svg style="left:728px;top:501px" width="10" height="8" fill="none" stroke="#8c8c8c" stroke-width="0.65"><g transform="translate(0.30 0.50)"><rect x="0.35" y="0.35" width="7.5" height="5.6" rx="0.7"/><path d="M0.6 1.2 L4.1 3.8 L7.6 1.2"/></g></svg><div class="upd" style="top:552px"></div><span class="t" style="left:739px;top:469px;font-size:9.5px;letter-spacing:-0.190px;color:#222;transform:translate(0.16px,0.77px) scaleX(0.9655) rotate(0.03deg);">Awaiting feedback notification</span><span class="t" style="left:728px;top:489px;font-size:8.4px;letter-spacing:-0.168px;color:#2190f3;transform:translate(0.32px,0.24px) scaleX(0.9051) rotate(0.03deg);-webkit-text-stroke:0.25px #2190f3;">Bambang Raharjo</span><span class="t" style="left:738px;top:500px;font-size:8.4px;letter-spacing:-0.168px;color:#2190f3;transform:translate(0.53px,0.74px) scaleX(0.8924) rotate(0.03deg);-webkit-text-stroke:0.25px #2190f3;">tes45t@gmail.com</span><span class="t" style="left:728px;top:511px;font-size:8.4px;letter-spacing:-0.168px;color:#2190f3;transform:translate(0.52px,0.94px) scaleX(0.8475) rotate(0.03deg);-webkit-text-stroke:0.25px #2190f3;">JPC123 Java</span><span class="t" style="left:728px;top:523px;font-size:8.6px;letter-spacing:-0.172px;color:#6a6a6a;transform:translate(0.07px,0.59px) scaleX(0.9643) rotate(0.03deg);">Submitted By Swapna Pandey</span><span class="t" style="left:732px;top:555px;font-size:6.8px;font-weight:700;letter-spacing:-0.136px;color:#35b958;transform:translate(0.18px,0.94px) scaleX(0.9260) rotate(0.03deg);">UPDATE STATUS</span></article>

  <svg style="left:940px;top:94px" width="7" height="461"><g transform="translate(0.00 0.00)"><rect x="1.9" y="0.8" width="3.2" height="470" rx="1.5" fill="#808080"/></g></svg>
</aside>

</div>
</body>
</html>
